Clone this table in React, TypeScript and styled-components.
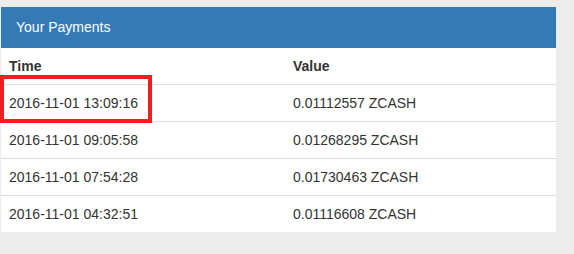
import React from 'react';
import styled, { createGlobalStyle } from 'styled-components';

const GlobalStyle = createGlobalStyle`
  html, body {
    margin: 0;
    padding: 0;
    background: #ececec;
  }
  body {
    font-family: 'Liberation Sans', Arial, sans-serif;
    font-size: 14px;
    line-height: 20px;
    color: #333;
  }
`;

const payments = [
  { time: '2016-11-01 13:09:16', value: '0.01112557 ZCASH' },
  { time: '2016-11-01 09:05:58', value: '0.01268295 ZCASH' },
  { time: '2016-11-01 07:54:28', value: '0.01730463 ZCASH' },
  { time: '2016-11-01 04:32:51', value: '0.01116608 ZCASH' },
];

export default function App() {
  return (
    <>
      <GlobalStyle />
      <Page>
        <Panel>
          <PanelHeading>Your Payments</PanelHeading>
          <Table>
            <thead>
              <tr>
                <Th $first>Time</Th>
                <Th>Value</Th>
              </tr>
            </thead>
            <tbody>
              {payments.map((p, i) => (
                <tr key={p.time}>
                  <Td $first={i === 0}>{p.time}</Td>
                  <Td $first={i === 0}>{p.value}</Td>
                </tr>
              ))}
            </tbody>
          </Table>
        </Panel>
        <Highlight />
      </Page>
    </>
  );
}

const Page = styled.div`
  position: relative;
  padding: 7px 0 0 1px;
  height: 247px;
`;

const Panel = styled.div`
  width: 555px;
  background: #fff;
`;

const PanelHeading = styled.div`
  background: #337ab7;
  color: #fff;
  padding: 10px 15px 11px;
  font-size: 14px;
  line-height: 20px;
`;

const Table = styled.table`
  width: 100%;
  border-collapse: collapse;
  border-spacing: 0;
`;

const Th = styled.th<{ $first?: boolean }>`
  text-align: left;
  font-weight: bold;
  padding: 8px;
  line-height: 20px;
  border-bottom: 1px solid #ddd;
  width: ${({ $first }) => ($first ? '268px' : 'auto')};
`;

const Td = styled.td<{ $first?: boolean }>`
  padding: 8px;
  line-height: 20px;
  border-top: ${({ $first }) => ($first ? '0' : '1px solid #ddd')};
`;

const Highlight = styled.div`
  position: absolute;
  left: 0;
  top: 75px;
  width: 152px;
  height: 48px;
  box-sizing: border-box;
  border: 4px solid #f01f1f;
`;
